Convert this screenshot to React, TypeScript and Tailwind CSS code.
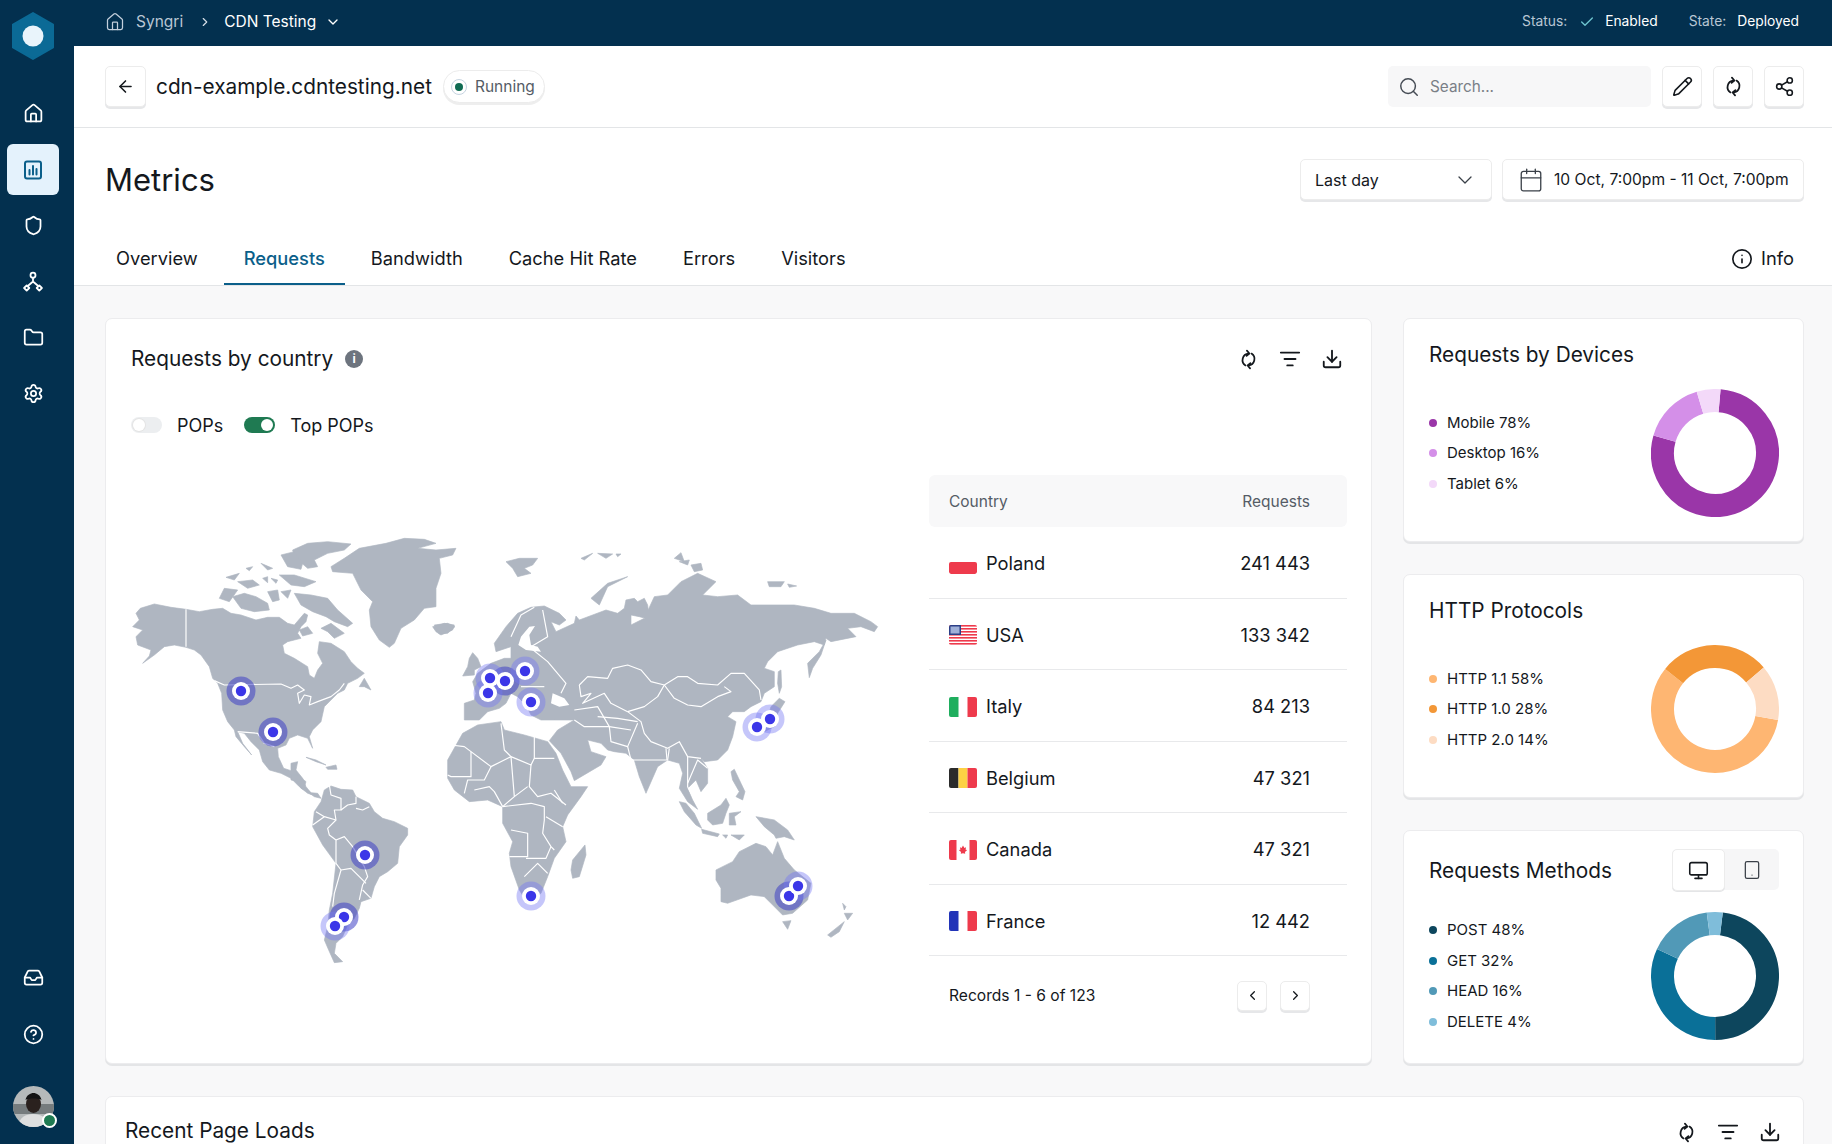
import { ReactNode } from 'react'
import {
  ArrowLeft,
  Calendar,
  Check,
  ChevronDown,
  ChevronLeft,
  ChevronRight,
  CircleHelp,
  Download,
  Folder,
  House,
  Inbox,
  Info,
  ListFilter,
  Monitor,
  Pencil,
  Search,
  Settings,
  Share2,
  Shield,
  Tablet,
} from 'lucide-react'

const LAND = '#afb6c1'

// west: north america, greenland. coords are 3x from (130,530)
const WEST_LAND = [
  '28,235 70,222 120,232 165,238 205,245 245,238 275,235 300,250 330,255 375,270 410,262 445,262 470,280 490,285 520,250 530,255 525,275 510,290 500,310 510,325 470,335 455,345 460,370 490,385 530,410 535,435 550,445 560,420 575,400 560,370 565,335 600,340 640,365 660,395 680,415 700,430 680,445 650,460 640,480 620,490 600,510 580,530 570,575 545,600 535,620 545,655 530,625 500,615 475,625 465,645 440,655 442,680 458,715 480,722 480,700 500,695 495,720 515,745 525,770 545,795 530,790 505,770 480,745 450,730 415,720 395,695 385,660 360,635 340,610 320,605 335,640 362,675 340,650 315,620 310,600 290,575 275,540 272,490 260,460 245,445 235,410 210,375 190,360 165,352 130,345 100,350 70,375 35,400 55,378 60,360 20,345 15,320 35,300 5,290 25,270 15,250',
  '490,190 540,195 590,205 620,240 665,280 650,290 610,275 585,260 545,245 510,225',
  '570,295 600,280 640,310 610,325 590,305',
  '305,200 340,190 375,200 410,220 415,240 370,245 330,235',
  '265,205 280,175 320,180 295,215',
  '320,155 365,150 385,165 350,175',
  '285,142 325,130 310,150',
  '345,115 365,110 355,122',
  '390,100 425,115 410,120',
  '395,145 410,140 410,158',
  '420,145 440,150 435,160',
  '485,60 530,40 590,35 660,42 640,60 590,70 550,90 560,110 530,115 490,80',
  '450,75 490,65 515,100 510,118 470,110',
  '445,135 490,135 555,155 520,170 480,165',
  '410,185 440,180 445,210 425,215',
  '450,185 480,180 470,205',
  '505,300 530,290 545,310 515,318',
  '600,110 640,85 685,55 765,40 820,25 880,28 915,40 860,55 915,60 975,55 965,75 925,85 930,130 915,175 915,230 880,235 850,270 810,295 790,340 775,352 745,330 720,290 715,240 725,215 690,180 665,130 605,125',
  '905,290 940,280 970,285 965,300 930,315 915,305',
  '525,682 555,690 585,705 555,695',
  '585,712 615,705 618,718 590,718',
  '685,470 700,445 720,480 700,470',
]

const WEST_LINES = [
  '250,452 280,465 450,462 480,475 500,465 520,480 500,490 505,520 520,495 540,500 535,525 560,515 600,500 625,480 640,460',
  '165,238 165,350',
  '320,605 380,610 400,640 430,650',
]

// south america, 3x from (290,770)
const SOUTH_LAND = [
  '100,60 120,48 150,58 185,60 195,80 235,100 250,125 275,145 310,155 350,175 350,195 325,230 320,280 290,305 265,320 250,350 240,385 210,395 205,415 190,445 170,465 155,500 135,520 130,550 155,575 130,578 113,540 100,510 110,470 115,420 125,370 135,280 95,225 65,170 70,125 90,95',
  '0,15 20,15 45,35 40,50 60,68 80,70 90,85 70,80 50,65 30,55 25,35 0,30',
]

const SOUTH_LINES = [
  '115,45 120,75 150,85 150,120 130,120 135,150 110,175 115,195 135,210 135,280 150,300 130,370 125,410',
  '75,125 100,140 135,150',
  '65,165 100,140',
  '150,120 170,105 195,100 195,80',
  '195,115 215,120 235,110',
  '135,210 160,200 185,230 220,290 230,320 215,345 205,390',
  '150,300 180,295 205,320 225,340',
  '215,360 240,385',
]

// old world, 3x from (430,530)
const EAST_LAND = [
  '190,340 225,290 260,250 300,232 340,228 385,250 405,270 385,285 360,275 375,305 430,280 435,258 445,270 525,240 560,250 580,235 585,210 610,205 620,215 640,205 650,225 655,268 625,260 600,255 600,285 640,265 670,200 710,195 750,155 800,130 855,155 815,195 860,200 920,195 960,225 1090,225 1150,235 1200,250 1270,250 1320,275 1340,290 1330,305 1290,290 1250,295 1275,320 1200,335 1185,325 1180,345 1150,335 1100,345 1040,365 1010,395 1000,415 1030,425 1030,470 1000,490 990,515 960,530 940,545 905,545 890,560 915,575 905,620 890,660 860,690 820,695 810,685 830,715 830,760 810,785 795,750 770,775 785,810 800,838 770,815 745,775 755,730 745,700 710,690 680,710 645,790 625,740 610,690 585,670 550,665 530,660 510,640 470,630 480,665 525,680 510,705 430,752 420,725 390,670 355,632 380,600 430,570 370,570 330,570 300,555 285,525 260,500 240,490 225,520 205,535 170,545 145,570 100,570 100,520 130,510 135,490 125,455 140,430 180,400 220,385 240,385 240,350 195,365 190,340',
  '1130,400 1165,365 1185,330 1170,375 1145,415 1135,443',
  '115,385 125,368 140,385 150,410 130,420 130,435 95,438 110,410',
  '95,610 140,585 210,575 220,600 280,615 350,635 375,670 395,720 420,770 470,770 450,800 410,855 395,890 405,935 370,985 350,1040 330,1090 290,1120 265,1080 240,1010 235,970 245,935 215,880 215,830 170,810 115,815 70,780 50,745 50,690',
  '425,990 462,945 465,975 445,1040 425,1045 420,1020',
  '1020,530 1045,505 1062,515 1040,550 1030,590 1000,605',
  '1042,425 1050,420 1052,470 1045,490 1040,460',
  '900,725 910,718 930,760 942,785 935,810 915,800 925,785 905,750',
  '745,815 765,820 790,850 812,895 795,885 760,845',
  '812,898 865,912 860,920 815,910',
  '875,915 890,915 885,925',
  '900,915 940,915 925,930',
  '830,850 870,825 885,805 895,825 885,850 875,880 845,885 830,870',
  '895,850 930,845 910,860 915,885 895,885',
  '975,860 1030,870 1070,900 1090,930 1060,920 1035,925 1030,915 1000,890',
  '855,1020 905,995 925,965 975,940 1005,950 1025,975 1040,935 1060,985 1090,1020 1140,1060 1130,1110 1085,1150 1055,1155 1020,1120 1000,1100 960,1095 890,1120 870,1115 870,1075 855,1050',
  '1055,1175 1080,1172 1070,1198',
  '1235,1120 1245,1130 1240,1140',
  '1240,1150 1265,1150 1250,1170',
  '1190,1215 1240,1175 1225,1205 1200,1222',
  '225,95 265,85 320,85 305,105 280,115 300,130 260,140 245,115',
  '480,205 530,160 590,140 530,170 505,225',
  '450,85 485,70 460,90',
  '500,70 545,72 525,85',
  '555,72 570,72 560,80',
  '730,85 750,68 760,95',
  '745,95 775,90 770,105',
  '780,105 810,100 815,120 790,125',
  '1010,155 1060,155 1050,170 1015,170',
  '1070,162 1097,168 1075,172',
  '10,285 50,280 72,290 50,310 25,312',
]

const EAST_WATER = [
  '365,490 400,505 415,525 385,530 360,520',
  '262,345 270,320 295,290 312,288 295,315 300,345 320,350 330,365 285,360',
]

const EAST_LINES = [
  '445,465 470,440 530,445 545,415 590,405 630,420 660,455 700,465',
  '700,465 740,440 770,440 800,460 860,465 900,430 940,430 985,480 990,510',
  '700,465 730,505 770,525 810,530 860,500 900,485 880,470',
  '700,465 680,500 640,530 590,545 630,575 640,610 660,635 710,655 745,635 770,680 810,685',
  '445,465 450,500 480,490 455,520 520,490 540,520 590,545',
  '430,540 500,530 535,590 540,635 590,650 620,580',
  '60,645 100,650 120,665 180,710 240,680 300,705 310,685 370,685',
  '210,580 220,660 240,680',
  '310,620 310,685',
  '300,705 295,770 320,800 360,790 405,825',
  '250,800 290,770',
  '215,830 250,800 240,680',
  '120,665 120,740 60,740 50,735',
  '180,710 160,750 110,750 100,790',
  '215,830 300,820 340,830 340,870 335,910 360,950 370,960',
  '240,900 290,910 290,980 235,980',
  '285,985 345,985 360,950',
  '280,1040 320,1000 350,1030',
  '240,320 270,255 310,232',
  '335,240 350,320 300,350',
  '300,355 350,395 405,460 390,490',
  '270,470 340,470',
  '770,680 770,770 790,810',
  '770,760 800,690 830,715',
  '500,560 560,565 620,575',
  '590,650 600,690 710,690 715,655',
  '130,780 175,770 190,785 215,830',
  '370,780 395,820',
  '535,590 600,600',
  '430,570 460,590 535,590',
  '345,860 395,890',
  '705,655 708,690',
]

const PINS: [number, number, boolean][] = [
  [240, 691, true],
  [272, 732, true],
  [504, 681, true],
  [489, 678, false],
  [487, 693, false],
  [524, 671, false],
  [530, 702, false],
  [756, 727, false],
  [769, 719, false],
  [530, 896, false],
  [788, 896, true],
  [797, 886, false],
  [364, 855, true],
  [343, 917, true],
  [334, 926, false],
]

function WorldMap() {
  const land = (list: string[]) =>
    list.map((p, i) => <polygon key={i} points={p} fill={LAND} stroke={LAND} strokeWidth={2} strokeLinejoin="round" />)
  const lines = (list: string[]) =>
    list.map((p, i) => <polyline key={i} points={p} fill="none" stroke="#ffffff" strokeWidth={3.5} strokeLinejoin="round" />)

  return (
    <svg width={760} height={460} viewBox="130 530 760 460" className="shrink-0">
      <g transform="translate(130 530) scale(0.3333)">
        {land(WEST_LAND)}
        {lines(WEST_LINES)}
      </g>
      <g transform="translate(290 770) scale(0.3333)">
        {land(SOUTH_LAND)}
        {lines(SOUTH_LINES)}
      </g>
      <g transform="translate(430 530) scale(0.3333)">
        {land(EAST_LAND)}
        {EAST_WATER.map((p, i) => (
          <polygon key={i} points={p} fill="#ffffff" />
        ))}
        {lines(EAST_LINES)}
      </g>
      {PINS.map(([x, y, dark], i) => (
        <circle key={i} cx={x} cy={y} r={14.5} fill={dark ? '#3e40c4' : '#7478f2'} fillOpacity={dark ? 0.55 : 0.42} />
      ))}
      {PINS.map(([x, y], i) => (
        <g key={i}>
          <circle cx={x} cy={y} r={9} fill="#ffffff" />
          <circle cx={x} cy={y} r={5.2} fill="#3b36e8" />
        </g>
      ))}
    </svg>
  )
}

function Sync({ size = 21 }: { size?: number }) {
  return (
    <svg width={size} height={size} viewBox="0 0 24 24" fill="none" stroke="currentColor" strokeWidth={2} strokeLinecap="round" strokeLinejoin="round">
      <path d="M12 5.2A7.4 7.4 0 0 0 8.6 18.8" />
      <path d="M12 18.8A7.4 7.4 0 0 0 15.4 5.2" />
      <path d="M10.2 1.8 13 5.1 9.8 7.8" />
      <path d="M13.8 22.2 11 18.9 14.2 16.2" />
    </svg>
  )
}

function ChartIcon() {
  return (
    <svg width={22} height={22} viewBox="0 0 22 22" fill="none" stroke="#0b5f8a" strokeWidth={2} strokeLinecap="round">
      <rect x="3" y="2.5" width="16" height="17" rx="2" />
      <path d="M7.5 11v4.5M11 7v8.5M14.5 10v5.5" />
    </svg>
  )
}

function NodesIcon() {
  return (
    <svg width={22} height={22} viewBox="0 0 22 22" fill="none" stroke="#ffffff" strokeWidth={1.8} strokeLinecap="round" strokeLinejoin="round">
      <circle cx="11" cy="4.2" r="2.5" />
      <path d="M4.7 14.4 7.3 17 4.7 19.6 2.1 17Z" />
      <path d="M17.3 14.4 19.9 17 17.3 19.6 14.7 17Z" />
      <path d="M11 6.8v3.7M11 10.5 5.8 15M11 10.5l5.2 4.5" />
    </svg>
  )
}

function Logo() {
  return (
    <svg width={44} height={48} viewBox="0 0 44 48" className="mt-[12px] shrink-0">
      <path d="M22 1 42 12.5V35.5L22 47 2 35.5V12.5Z" fill="#0b6a96" stroke="#0b6a96" strokeWidth={2} strokeLinejoin="round" />
      <circle cx="22" cy="24" r="10.5" fill="#e9f4fb" />
    </svg>
  )
}

function Avatar() {
  return (
    <div className="relative h-[41px] w-[41px] shrink-0">
      <svg width={41} height={41} viewBox="0 0 41 41" className="rounded-full">
        <rect width="41" height="41" fill="#b5b9ba" />
        <rect y="18" width="41" height="10" fill="#767c7e" />
        <path d="M5 41c1-10 8-13 15-13s15 3 16 13Z" fill="#dedfdf" />
        <ellipse cx="20.5" cy="18" rx="7.5" ry="9" fill="#2a211e" />
        <path d="M12.5 14c1-5 5-7 8-7s7 2 8 7c-3-2-13-2-16 0Z" fill="#141414" />
      </svg>
      <span className="absolute right-[-3px] bottom-[-1px] h-[15px] w-[15px] rounded-full border-2 border-white bg-[#1f7a52]" />
    </div>
  )
}

function SideItem({ children, active }: { children: ReactNode; active?: boolean }) {
  return (
    <div className={`flex h-[51px] w-[52px] items-center justify-center rounded-md text-white ${active ? 'bg-[#e4f2fc]' : ''}`}>
      {children}
    </div>
  )
}

function Sidebar() {
  return (
    <aside className="flex h-full w-[74px] shrink-0 flex-col items-center bg-[#03304f] pr-[8px]">
      <Logo />
      <div className="mt-[28px] flex flex-col gap-[5px]">
        <SideItem><House size={21} /></SideItem>
        <SideItem active><ChartIcon /></SideItem>
        <SideItem><Shield size={21} /></SideItem>
        <SideItem><NodesIcon /></SideItem>
        <SideItem><Folder size={21} /></SideItem>
        <SideItem><Settings size={21} /></SideItem>
      </div>
      <div className="mt-auto flex flex-col items-center gap-[6px]">
        <SideItem><Inbox size={21} /></SideItem>
        <SideItem><CircleHelp size={21} /></SideItem>
        <div className="mt-[20px] mb-[17px]">
          <Avatar />
        </div>
      </div>
    </aside>
  )
}

function TopBar() {
  return (
    <div className="flex h-[46px] shrink-0 items-center justify-between bg-[#03304f] pr-[33px] pb-[3px] pl-[31px] text-[15.5px]">
      <div className="flex items-center">
        <House size={20} className="text-[#c3cfdc]" strokeWidth={1.5} />
        <span className="ml-[11px] text-[#b9c6d4]">Syngri</span>
        <ChevronRight size={14} className="ml-[15px] text-[#d5dde6]" />
        <span className="ml-[12px] text-white">CDN Testing</span>
        <ChevronDown size={16} className="ml-[9px] text-white" />
      </div>
      <div className="flex items-center text-[13.8px]">
        <span className="text-[#b9c6d4]">Status:</span>
        <Check size={16} className="ml-[12px] text-[#6fc5cf]" />
        <span className="ml-[10px] text-white">Enabled</span>
        <span className="ml-[31px] text-[#b9c6d4]">State:</span>
        <span className="ml-[11px] text-white">Deployed</span>
      </div>
    </div>
  )
}

function IconButton({ children, size = 'h-[41px] w-[40px]' }: { children: ReactNode; size?: string }) {
  return (
    <button className={`flex ${size} items-center justify-center rounded-[5px] border border-[#ececec] bg-white text-[#14181d] shadow-[0_2px_0_#e6e7e9]`}>
      {children}
    </button>
  )
}

function PageHeader() {
  return (
    <div className="flex h-[82px] shrink-0 items-center border-b border-[#e3e5e7] bg-white pr-[28px] pl-[31px]">
      <IconButton size="h-[41px] w-[41px]"><ArrowLeft size={19} /></IconButton>
      <h2 className="mt-[1px] ml-[10px] text-[20.8px] text-[#14181d]">cdn-example.cdntesting.net</h2>
      <div className="ml-[11px] flex h-[33px] items-center gap-[8px] rounded-full border border-[#ececec] bg-white px-[7px] pr-[9px] shadow-[0_2px_0_#eeeeee]">
        <span className="flex h-[16px] w-[16px] items-center justify-center rounded-full border border-[#c5d3e0]">
          <span className="h-[8px] w-[8px] rounded-full bg-[#0f6b53]" />
        </span>
        <span className="text-[15.5px] text-[#555c66]">Running</span>
      </div>
      <div className="ml-auto flex h-[41px] w-[263px] items-center gap-[10px] rounded-[5px] bg-[#f7f7f8] px-[10px]">
        <Search size={22} className="text-[#454b54]" strokeWidth={1.6} />
        <span className="mt-[1px] text-[15.3px] text-[#7a7f87]">Search...</span>
      </div>
      <div className="ml-[11px] flex gap-[11px]">
        <IconButton><Pencil size={21} strokeWidth={1.8} /></IconButton>
        <IconButton><Sync /></IconButton>
        <IconButton><Share2 size={21} strokeWidth={1.8} /></IconButton>
      </div>
    </div>
  )
}

function MetricsHeader() {
  return (
    <div className="flex items-start pt-[31px] pr-[28px] pl-[31px]">
      <h1 className="text-[31px] leading-[41px] text-[#14181d]">Metrics</h1>
      <div className="ml-auto flex h-[41px] w-[192px] items-center justify-between rounded-[5px] border border-[#ececec] bg-white pr-[14px] pl-[14px] text-[16px] shadow-[0_2px_0_#e6e7e9]">
        <span>Last day</span>
        <ChevronDown size={24} strokeWidth={1.3} className="text-[#3a4048]" />
      </div>
      <div className="ml-[10px] flex h-[41px] w-[302px] items-center gap-[10px] rounded-[5px] border border-[#ececec] bg-white pl-[15px] text-[15.6px] shadow-[0_2px_0_#e6e7e9]">
        <Calendar size={26} strokeWidth={1.2} className="text-[#3a4048]" />
        <span>10 Oct, 7:00pm - 11 Oct, 7:00pm</span>
      </div>
    </div>
  )
}

const TABS = ['Overview', 'Requests', 'Bandwidth', 'Cache Hit Rate', 'Errors', 'Visitors']

function Tabs() {
  return (
    <div className="mt-[31px] flex h-[55px] shrink-0 items-stretch gap-[6px] border-b border-[#e3e5e7] pr-[38px] pl-[22px] text-[18.3px]">
      {TABS.map((t) => (
        <div
          key={t}
          className={`flex items-center border-b-2 px-[20px] pt-[3px] ${t === 'Requests' ? 'border-[#0b5f8a] font-medium text-[#0b5f8a]' : 'border-transparent text-[#14181d]'}`}
        >
          {t}
        </div>
      ))}
      <div className="ml-auto flex items-center gap-[8px] pt-[1px]">
        <Info size={22} strokeWidth={1.8} />
        <span>Info</span>
      </div>
    </div>
  )
}

function CardIcons() {
  return (
    <div className="flex items-center gap-[20px] text-[#14181d]">
      <Sync />
      <ListFilter size={22} />
      <Download size={22} />
    </div>
  )
}

function Toggle({ on }: { on?: boolean }) {
  return (
    <span className={`flex h-[16px] w-[31px] items-center rounded-full px-[2px] ${on ? 'justify-end bg-[#1f7a52]' : 'bg-[#eceef0]'}`}>
      <span className={`h-[12px] w-[12px] rounded-full ${on ? 'bg-white' : 'bg-white shadow-[0_0_0_1px_#e4e4e4]'}`} />
    </span>
  )
}

function Flag({ name }: { name: string }) {
  return (
    <svg width={28} height={20} viewBox="0 0 28 20" className="shrink-0 rounded-[2px]">
      {name === 'Poland' && <rect y="8" width="28" height="12" rx="2" fill="#ee3a4c" />}
      {name === 'USA' && (
        <>
          {[0, 1, 2, 3, 4, 5, 6].map((i) => (
            <rect key={i} y={i * 3} width="28" height="1.6" fill="#ee3a4c" />
          ))}
          <rect width="12" height="10" fill="#2b3f87" />
          <rect x="1.5" y="1.5" width="9" height="7" fill="#9fb0d8" />
        </>
      )}
      {name === 'Italy' && (
        <>
          <rect width="9.5" height="20" fill="#1fae5e" />
          <rect x="18.5" width="9.5" height="20" fill="#ee3a4c" />
        </>
      )}
      {name === 'Belgium' && (
        <>
          <rect width="9.5" height="20" fill="#2b2b2b" />
          <rect x="9.5" width="9" height="20" fill="#fdd144" />
          <rect x="18.5" width="9.5" height="20" fill="#ee3a4c" />
        </>
      )}
      {name === 'Canada' && (
        <>
          <rect width="7.5" height="20" fill="#ee3a4c" />
          <rect x="20.5" width="7.5" height="20" fill="#ee3a4c" />
          <path d="M14 5.5l1.4 2.4 1.6-.6-.4 2.4 1.6.4-2.2 2 .2 1.6-2.2-.4-2.2.4.2-1.6-2.2-2 1.6-.4-.4-2.4 1.6.6Z" fill="#ee3a4c" />
        </>
      )}
      {name === 'France' && (
        <>
          <rect width="9.5" height="20" fill="#2234b8" />
          <rect x="18.5" width="9.5" height="20" fill="#ee3a4c" />
        </>
      )}
    </svg>
  )
}

const COUNTRIES = [
  ['Poland', '241 443'],
  ['USA', '133 342'],
  ['Italy', '84 213'],
  ['Belgium', '47 321'],
  ['Canada', '47 321'],
  ['France', '12 442'],
]

function CountryTable() {
  return (
    <div className="ml-[38px] w-[418px] shrink-0">
      <div className="flex h-[52px] items-center justify-between rounded-[6px] bg-[#f8f8f9] pt-[2px] pr-[37px] pl-[20px] text-[15.5px] text-[#555c66]">
        <span>Country</span>
        <span>Requests</span>
      </div>
      {COUNTRIES.map(([name, value]) => (
        <div key={name} className="flex h-[71.5px] items-center border-b border-[#e8e9eb] pt-[3px] pr-[37px] pl-[20px] text-[18.3px] text-[#14181d]">
          <Flag name={name} />
          <span className="ml-[9px]">{name}</span>
          <span className="ml-auto">{value}</span>
        </div>
      ))}
      <div className="flex h-[76px] items-center pt-[3px] pr-[37px] pl-[20px] text-[15.6px] text-[#14181d]">
        <span>Records 1 - 6 of 123</span>
        <div className="ml-auto flex gap-[13px]">
          <IconButton size="h-[30px] w-[30px]"><ChevronLeft size={15} /></IconButton>
          <IconButton size="h-[30px] w-[30px]"><ChevronRight size={15} /></IconButton>
        </div>
      </div>
    </div>
  )
}

function CountryCard() {
  return (
    <section className="h-[746px] w-[1267px] shrink-0 rounded-[7px] border border-[#ececee] bg-white px-[25px] pt-[26px] shadow-[0_2px_0_#e4e5e7]">
      <div className="flex h-[28px] items-center pr-[3px]">
        <h3 className="text-[20.8px] text-[#14181d]">Requests by country</h3>
        <span className="ml-[12px] flex h-[18px] w-[18px] items-center justify-center rounded-full bg-[#6d747e] text-[12px] font-bold text-white">i</span>
        <div className="ml-auto">
          <CardIcons />
        </div>
      </div>
      <div className="mt-[40px] flex h-[24px] items-center text-[18px] text-[#14181d]">
        <Toggle />
        <span className="ml-[15px]">POPs</span>
        <span className="ml-[21px]"><Toggle on /></span>
        <span className="ml-[15px]">Top POPs</span>
      </div>
      <div className="mt-[38px] flex items-start">
        <div className="mt-[55px]">
          <WorldMap />
        </div>
        <CountryTable />
      </div>
    </section>
  )
}

type Slice = { label: string; value: number; color: string }

function arc(start: number, end: number, r: number) {
  const rad = (a: number) => ((a - 90) * Math.PI) / 180
  const x1 = 64 + r * Math.cos(rad(start))
  const y1 = 64 + r * Math.sin(rad(start))
  const x2 = 64 + r * Math.cos(rad(end))
  const y2 = 64 + r * Math.sin(rad(end))
  return `M${x1} ${y1}A${r} ${r} 0 ${end - start > 180 ? 1 : 0} 1 ${x2} ${y2}`
}

function Donut({ slices, start }: { slices: Slice[]; start: number }) {
  let angle = start
  return (
    <svg width={128} height={128} viewBox="0 0 128 128" className="shrink-0">
      {slices.map((s) => {
        const from = angle
        angle += (s.value / 100) * 360
        return <path key={s.label} d={arc(from, angle, 52.5)} fill="none" stroke={s.color} strokeWidth={23} />
      })}
    </svg>
  )
}

function Legend({ slices }: { slices: Slice[] }) {
  return (
    <ul className="flex flex-col gap-[10.5px] text-[15px] leading-[20px] text-[#14181d]">
      {slices.map((s) => (
        <li key={s.label} className="flex items-center gap-[10px]">
          <span className="h-[8px] w-[8px] rounded-full" style={{ backgroundColor: s.color }} />
          {s.label} {s.value}%
        </li>
      ))}
    </ul>
  )
}

const DEVICES: Slice[] = [
  { label: 'Mobile', value: 78, color: '#9a36a8' },
  { label: 'Desktop', value: 16, color: '#d48fe8' },
  { label: 'Tablet', value: 6, color: '#f3d9f9' },
]
const PROTOCOLS: Slice[] = [
  { label: 'HTTP 1.1', value: 58, color: '#feb672' },
  { label: 'HTTP 1.0', value: 28, color: '#f39737' },
  { label: 'HTTP 2.0', value: 14, color: '#fddcc3' },
]
const METHODS: Slice[] = [
  { label: 'POST', value: 48, color: '#0d465d' },
  { label: 'GET', value: 32, color: '#0a7098' },
  { label: 'HEAD', value: 16, color: '#5199b7' },
  { label: 'DELETE', value: 4, color: '#7fbdda' },
]

function DonutCard({ title, slices, start }: { title: string; slices: Slice[]; start: number }) {
  return (
    <section className="h-[224px] rounded-[7px] border border-[#ececee] bg-white pt-[22px] pr-[24px] pl-[25px] shadow-[0_2px_0_#e4e5e7]">
      <h3 className="text-[20.8px] leading-[28px] text-[#14181d]">{title}</h3>
      <div className="mt-[20px] flex items-center justify-between">
        <Legend slices={slices} />
        <Donut slices={slices} start={start} />
      </div>
    </section>
  )
}

function MethodsCard() {
  return (
    <section className="h-[234px] rounded-[7px] border border-[#ececee] bg-white pt-[18px] pr-[24px] pl-[25px] shadow-[0_2px_0_#e4e5e7]">
      <div className="flex items-center justify-between">
        <h3 className="mt-[2px] text-[20.8px] text-[#14181d]">Requests Methods</h3>
        <div className="flex h-[41px] w-[107px] rounded-[5px] bg-[#f6f6f7]">
          <span className="flex h-[42px] w-[53px] items-center justify-center rounded-[5px] border border-[#ececec] bg-white shadow-[0_1px_0_#e4e5e7]">
            <Monitor size={21} strokeWidth={1.8} />
          </span>
          <span className="flex flex-1 items-center justify-center text-[#3a4048]">
            <Tablet size={20} strokeWidth={1.5} />
          </span>
        </div>
      </div>
      <div className="mt-[22px] flex items-center justify-between">
        <Legend slices={METHODS} />
        <Donut slices={METHODS} start={7} />
      </div>
    </section>
  )
}

export default function App() {
  return (
    <div className="flex h-[1144px] w-[1832px] overflow-hidden bg-[#f8f8f9] font-['Inter',sans-serif] text-[#14181d]">
      <Sidebar />
      <div className="flex min-w-0 flex-1 flex-col">
        <TopBar />
        <div className="shrink-0 bg-white">
          <PageHeader />
          <MetricsHeader />
          <Tabs />
        </div>
        <main className="flex flex-col gap-[32px] pt-[32px] pr-[28px] pl-[31px]">
          <div className="flex gap-[31px]">
            <CountryCard />
            <div className="flex w-[401px] shrink-0 flex-col gap-[32px]">
              <DonutCard title="Requests by Devices" slices={DEVICES} start={5} />
              <DonutCard title="HTTP Protocols" slices={PROTOCOLS} start={100} />
              <MethodsCard />
            </div>
          </div>
          <section className="flex h-[90px] items-start justify-between rounded-[7px] border border-[#ececee] bg-white pt-[20px] pr-[22px] pl-[19px]">
            <h3 className="text-[20.8px] leading-[28px] text-[#14181d]">Recent Page Loads</h3>
            <div className="mt-[4px]">
              <CardIcons />
            </div>
          </section>
        </main>
      </div>
    </div>
  )
}
